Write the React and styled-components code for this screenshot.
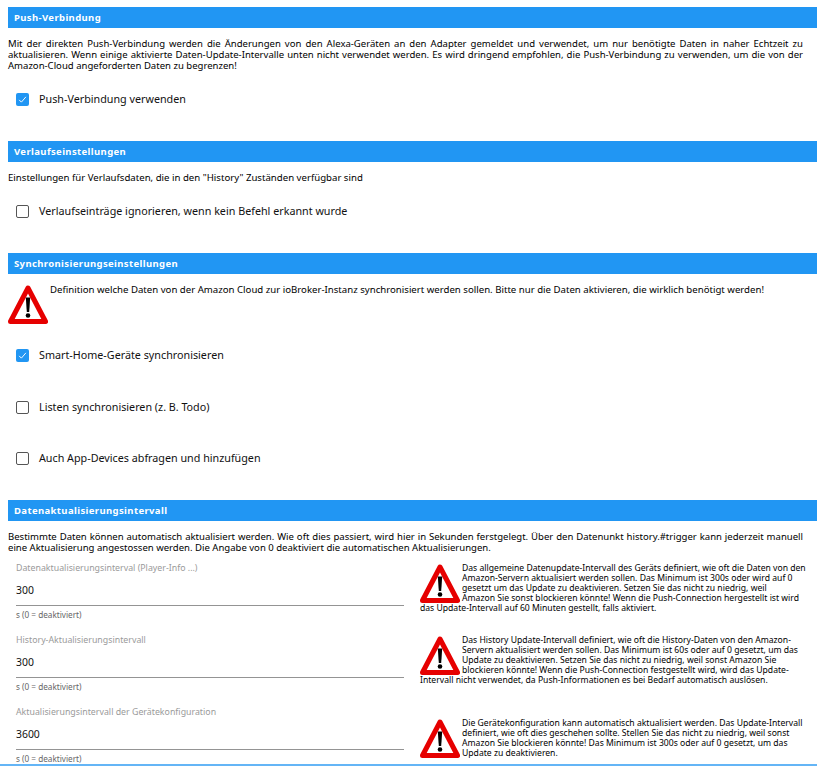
import React from 'react';
import styled, { createGlobalStyle } from 'styled-components';

const GlobalStyle = createGlobalStyle`
    html, body {
        margin: 0;
        padding: 0;
        background: #fff;
        overflow: hidden;
    }
    body {
        font-family: "Noto Sans", "Open Sans", sans-serif;
        color: #000;
    }
`;

const Page = styled.div`
    height: 766px;
    padding: 7px 0 0 8px;
    box-sizing: border-box;
    overflow: hidden;
    position: relative;
`;

const Section = styled.section`
    height: ${(p) => p.$height}px;
`;

const Header = styled.div`
    height: 21px;
    line-height: 21px;
    background: #2196f3;
    color: #fff;
    font-size: 9.5px;
    font-weight: 700;
    letter-spacing: 0.38px;
    padding-left: 6px;
`;

const Intro = styled.p`
    margin: 10px 0 0;
    font-size: ${(p) => (p.$wide ? 9.55 : 9.63)}px;
    line-height: 11px;
    padding-right: 14px;
    text-align: ${(p) => (p.$wide ? 'justify' : 'left')};
`;

const CheckRow = styled.label`
    display: flex;
    align-items: center;
    height: 16px;
    margin: ${(p) => p.$top}px 0 0 8px;
    font-size: 10.75px;
    color: #111;
`;

const Box = styled.span`
    width: 13px;
    height: 13px;
    box-sizing: border-box;
    border-radius: 2px;
    margin-right: 10px;
    display: flex;
    align-items: center;
    justify-content: center;
    background: ${(p) => (p.$checked ? '#2196f3' : '#fff')};
    border: ${(p) => (p.$checked ? 'none' : '1.5px solid #555')};
`;

const Warning = styled.svg`
    float: left;
    width: 40px;
    height: 40px;
    margin-right: 2px;
`;

const WarnBlock = styled.div`
    margin-top: 10px;
    font-size: 9.63px;
    line-height: 11px;
    height: 60px;
`;

const Columns = styled.div`
    display: flex;
    margin-top: 4px;
`;

const Fields = styled.div`
    width: 388px;
    margin-left: 8px;
    flex-shrink: 0;
`;

const Field = styled.div`
    height: 72px;
`;

const Label = styled.div`
    font-size: 8.8px;
    line-height: 11px;
    color: #9a9a9a;
    padding-top: 6px;
`;

const Value = styled.div`
    margin-top: 9px;
    font-size: 10.4px;
    line-height: 14px;
    padding-bottom: 8px;
    border-bottom: 1px solid #949494;
    color: #111;
`;

const Hint = styled.div`
    margin-top: 4px;
    font-size: 8.2px;
    line-height: 10px;
    color: #666;
`;

const Notes = styled.div`
    flex: 1;
    margin-left: 16px;
    padding-right: 8px;
`;

const Note = styled.div`
    height: ${(p) => p.$height}px;
    padding-top: 6px;
    box-sizing: border-box;
    font-size: 8.62px;
    line-height: 10px;
    white-space: pre-line;
`;

const BottomLine = styled.div`
    position: absolute;
    left: 0;
    right: 0;
    bottom: 0;
    height: 2px;
    background: #64b5f6;
`;

const WarningIcon = () => (
    <Warning viewBox="0 0 40 40">
        <path d="M20 4 L37.5 37.5 L2.5 37.5 Z" fill="#fff" stroke="#e60000" strokeWidth="5" strokeLinejoin="round" />
        <path d="M17.8 13.5 h4.4 l-1 14.5 h-2.4 Z" fill="#000" />
        <circle cx="20" cy="31.5" r="2.3" fill="#000" />
    </Warning>
);

const Check = ({ checked, children, top }) => (
    <CheckRow $top={top}>
        <Box $checked={checked}>
            {checked && (
                <svg width="9" height="9" viewBox="0 0 24 24" fill="none" stroke="#fff" strokeWidth="2.5">
                    <path d="M3 13 L9 19 L21 5" />
                </svg>
            )}
        </Box>
        {children}
    </CheckRow>
);

const fields = [
    { label: 'Datenaktualisierungsinterval (Player-Info ...)', value: '300' },
    { label: 'History-Aktualisierungsintervall', value: '300' },
    { label: 'Aktualisierungsintervall der Gerätekonfiguration', value: '3600' },
];

const notes = [
    {
        height: 72,
        text: 'Das allgemeine Datenupdate-Intervall des Geräts definiert, wie oft die Daten von den Amazon-Servern aktualisiert werden sollen. Das Minimum ist 300s oder wird auf 0 gesetzt um das Update zu deaktivieren. Setzen Sie das nicht zu niedrig, weil\nAmazon Sie sonst blockieren könnte! Wenn die Push-Connection hergestellt ist wird das Update-Intervall auf 60 Minuten gestellt, falls aktiviert.',
    },
    {
        height: 83,
        text: 'Das History Update-Intervall definiert, wie oft die History-Daten von den Amazon-Servern aktualisiert werden sollen. Das Minimum ist 60s oder auf 0 gesetzt, um das Update zu deaktivieren. Setzen Sie das nicht zu niedrig, weil sonst Amazon Sie blockieren könnte! Wenn die Push-Connection festgestellt wird, wird das Update-Intervall nicht verwendet, da Push-Informationen es bei Bedarf automatisch auslösen.',
    },
    {
        height: 60,
        text: 'Die Gerätekonfiguration kann automatisch aktualisiert werden. Das Update-Intervall definiert, wie oft dies geschehen sollte. Stellen Sie das nicht zu niedrig, weil sonst Amazon Sie blockieren könnte! Das Minimum ist 300s oder auf 0 gesetzt, um das Update zu deaktivieren.',
    },
];

const App = () => {
    return (
        <Page>
            <GlobalStyle />
            <Section $height={134}>
                <Header>Push-Verbindung</Header>
                <Intro $wide>
                    Mit der direkten Push-Verbindung werden die Änderungen von den Alexa-Geräten an den Adapter gemeldet und verwendet, um nur benötigte Daten in naher Echtzeit zu aktualisieren. Wenn einige aktivierte Daten-Update-Intervalle unten nicht verwendet werden. Es wird dringend empfohlen, die Push-Verbindung zu verwenden, um die von der Amazon-Cloud angeforderten Daten zu begrenzen!
                </Intro>
                <Check checked top={20}>Push-Verbindung verwenden</Check>
            </Section>
            <Section $height={112}>
                <Header>Verlaufseinstellungen</Header>
                <Intro>Einstellungen für Verlaufsdaten, die in den "History" Zuständen verfügbar sind</Intro>
                <Check top={20}>Verlaufseinträge ignorieren, wenn kein Befehl erkannt wurde</Check>
            </Section>
            <Section $height={247}>
                <Header>Synchronisierungseinstellungen</Header>
                <WarnBlock>
                    <WarningIcon />
                    Definition welche Daten von der Amazon Cloud zur ioBroker-Instanz synchronisiert werden sollen. Bitte nur die Daten aktivieren, die wirklich benötigt werden!
                </WarnBlock>
                <Check checked top={3}>Smart-Home-Geräte synchronisieren</Check>
                <Check top={36}>Listen synchronisieren (z. B. Todo)</Check>
                <Check top={35}>Auch App-Devices abfragen und hinzufügen</Check>
            </Section>
            <Section>
                <Header>Datenaktualisierungsintervall</Header>
                <Intro $wide>
                    Bestimmte Daten können automatisch aktualisiert werden. Wie oft dies passiert, wird hier in Sekunden ferstgelegt. Über den Datenunkt history.#trigger kann jederzeit manuell eine Aktualisierung angestossen werden. Die Angabe von 0 deaktiviert die automatischen Aktualisierungen.
                </Intro>
                <Columns>
                    <Fields>
                        {fields.map((f) => (
                            <Field key={f.label}>
                                <Label>{f.label}</Label>
                                <Value>{f.value}</Value>
                                <Hint>s (0 = deaktiviert)</Hint>
                            </Field>
                        ))}
                    </Fields>
                    <Notes>
                        {notes.map((n) => (
                            <Note key={n.height} $height={n.height}>
                                <WarningIcon />
                                {n.text}
                            </Note>
                        ))}
                    </Notes>
                </Columns>
            </Section>
            <BottomLine />
        </Page>
    );
};

export default App;
